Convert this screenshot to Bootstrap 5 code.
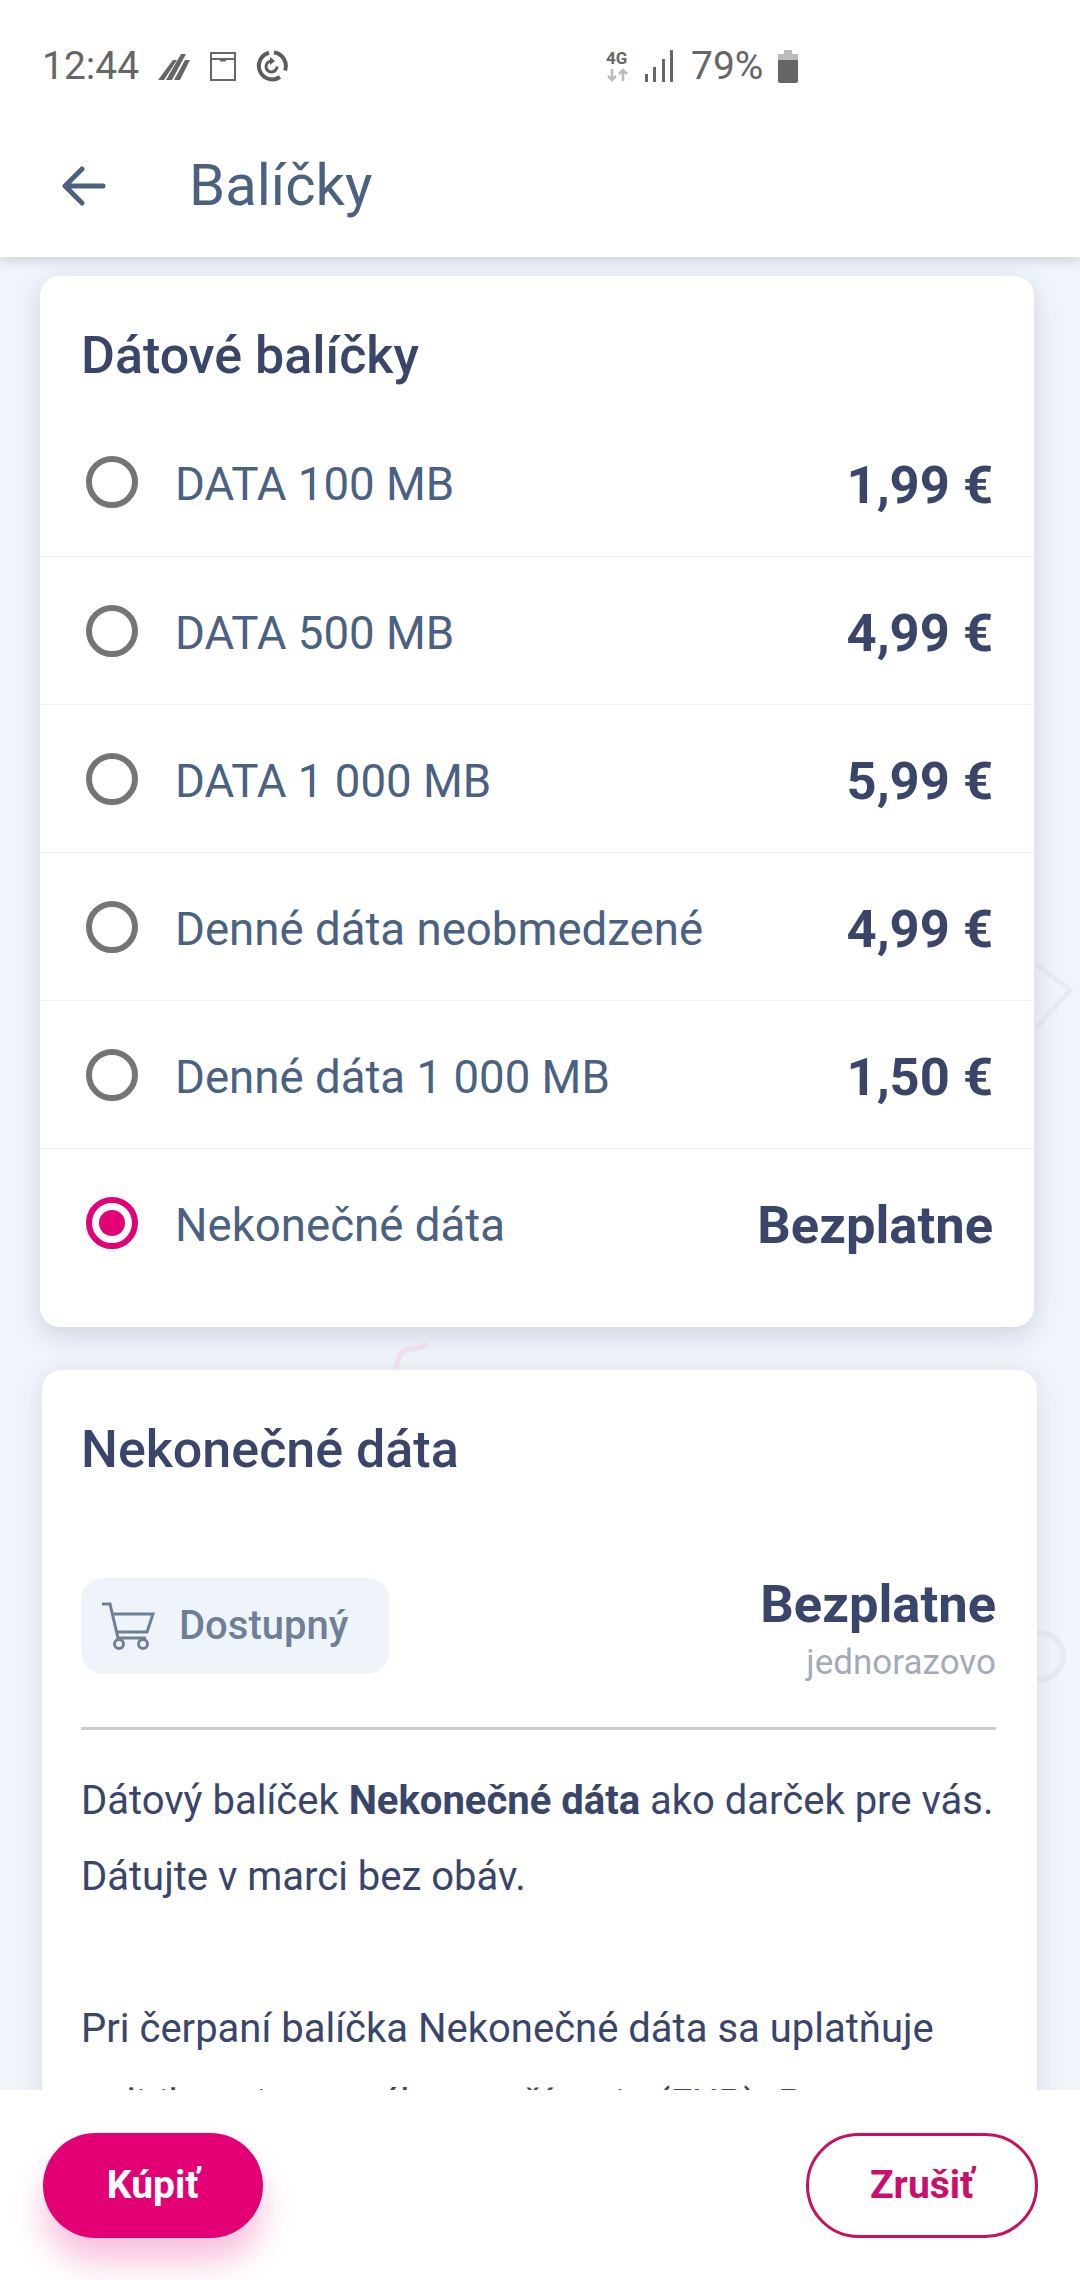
<!DOCTYPE html>
<html lang="sk">
<head>
<meta charset="utf-8">
<title>Balíčky</title>
<link href="https://cdn.jsdelivr.net/npm/bootstrap@5.3.0/dist/css/bootstrap.min.css" rel="stylesheet">
<style>
html, body { margin: 0; height: 100%; }
body { font-family: Roboto, "Liberation Sans", sans-serif; background: #f0f4fb; color: #39456b; }
.screen { width: 1080px; height: 2280px; overflow: hidden; }
.top-area { background: #fff; height: 257px; box-shadow: 0 2px 12px rgba(60,70,100,.24); z-index: 2; }
.status-bar { height: 132px; padding: 0 0 0 42px; color: #666; font-size: 39px; }
.status-time { width: 98px; }
.status-gap-a { margin-left: 18px; }
.status-gap-b { margin-left: 20px; }
.status-right { margin-left: 318px; }
.status-signal { margin-left: 14px; }
.status-pct { margin: 0 14px 0 17px; font-size: 39px; }
.title-bar { height: 125px; padding-bottom: 18px; }
.back-arrow { margin-left: 62px; width: 44px; height: 40px; }
.page-title { margin: 0 0 0 83px; font-size: 58px; font-weight: 400; color: #4a6182; }
.content { flex: 1 1 auto; overflow: hidden; position: relative; }
.decor { position: absolute; inset: 0; width: 100%; height: 100%; }
.pack-card { position: relative; background: #fff; border: 0; border-radius: 20px; box-shadow: 0 8px 26px rgba(70,85,125,.2); }
.pack-first { margin: 19px 46px 0 40px; height: 1051px; }
.pack-second { margin: 43px 43px 0 42px; height: 1100px; box-shadow: 0 4px 26px rgba(70,85,125,.14); }
.card-heading { font-size: 52px; font-weight: 500; color: #39456b; margin: 0; line-height: 1; }
.pack-first .card-heading { padding: 54px 0 0 41px; height: 132px; }
.offer { height: 148px; padding: 0 41px 0 46px; border-top: 1px solid #f2f3f7; }
.offer:first-of-type { border-top: 0; }
.offer-mark { width: 52px; height: 52px; border-radius: 50%; border: 6px solid #757575; flex: none; }
.offer-mark.picked { border-color: #e20074; display: flex; align-items: center; justify-content: center; }
.offer-mark.picked::after { content: ""; width: 26px; height: 26px; border-radius: 50%; background: #e20074; }
.offer-name { margin-left: 37px; padding-top: 7px; font-size: 45.6px; color: #4a6182; }
.offer-price { padding-top: 6px; font-size: 52.5px; font-weight: 700; color: #39456b; }
.pack-second .card-heading { padding: 54px 0 0 39px; height: 193px; }
.detail-head { margin: 0 41px 0 39px; height: 167px; padding-top: 15px; border-bottom: 3px solid #ccc; }
.avail-tag { width: 308px; height: 96px; background: #eff4fa; border-radius: 22px; padding-left: 20px; color: #6f7f99; font-size: 40px; font-weight: 500; }
.avail-tag svg { width: 54px; height: 48px; margin-right: 24px; }
.detail-price { font-size: 52.5px; font-weight: 700; line-height: 1; }
.detail-note { font-size: 35px; color: #a4abb8; line-height: 1; margin-top: 14px; }
.detail-text { margin: 0 30px 0 39px; padding-top: 33px; font-size: 40px; line-height: 76px; color: #39456b; }
.detail-text p { margin: 0 0 76px; }
.detail-text strong { font-weight: 700; }
.action-bar { height: 190px; background: #fff; padding: 0 42px 0 42px; z-index: 2; flex: none; }
.action-btn { height: 105px; border-radius: 53px; font-size: 39px; font-weight: 700; margin-top: 1px; display: flex; align-items: center; justify-content: center; }
.action-buy, .action-buy:hover { width: 220px; background: #e20074; color: #fff; border: 0; box-shadow: 0 24px 32px rgba(226,0,116,.24); margin-left: 1px; }
.action-cancel, .action-cancel:hover { width: 232px; background: #fff; color: #cc0f6c; border: 3px solid #c9105f; }
</style>
</head>
<body>
<div class="screen d-flex flex-column">
  <header class="top-area position-relative flex-shrink-0">
    <div class="status-bar d-flex align-items-center">
      <span class="status-time">12:44</span>
      <svg class="status-gap-a" width="32" height="28" viewBox="0 0 32 28" fill="#666"><path d="M0 28 15 8h4L6 28zM8 28 23 2h5L14 28zM16 28 27 8h5L22 28z"/></svg>
      <svg class="status-gap-b" width="26" height="29" viewBox="0 0 26 29" fill="none" stroke="#666" stroke-width="2"><rect x="1" y="1" width="24" height="27"/><path d="M1 7h24M10 8.500h6"/></svg>
      <svg class="status-gap-b" width="32" height="32" viewBox="0 0 32 32" fill="none" stroke="#5c5c5c" stroke-width="4"><path d="M18 2.500a13.500 13.500 0 0 1 11 18M24 27A13.500 13.500 0 1 1 13 2.800"/><path d="M21 16.500a5.500 5.500 0 1 1-5-5.500" stroke-width="3"/><path d="M14 7l5 4-5 4z" fill="#5c5c5c" stroke="none"/></svg>
      <div class="status-right d-flex align-items-center">
        <svg width="24" height="34" viewBox="0 0 24 34"><text x="0" y="15" font-family="Roboto, sans-serif" font-size="17" font-weight="700" fill="#666">4G</text><path d="M6 20v11M2 27l4 4 4-4M17 32V21M13 25l4-4 4 4" fill="none" stroke="#bbb" stroke-width="2.500"/></svg>
        <svg class="status-signal" width="30" height="32" viewBox="0 0 30 32" fill="#666"><rect x="1" y="24" width="3" height="8"/><rect x="9" y="17" width="3" height="15"/><rect x="18" y="9" width="3" height="23"/><rect x="26" y="0" width="3" height="32"/></svg>
        <span class="status-pct">79%</span>
        <svg width="22" height="33" viewBox="0 0 22 33"><path d="M7 0h8v4h6v8H1V4h6z" fill="#bbb"/><path d="M1 10h20v21a2 2 0 0 1-2 2H3a2 2 0 0 1-2-2z" fill="#666"/></svg>
      </div>
    </div>
    <div class="title-bar d-flex align-items-center">
      <svg class="back-arrow" viewBox="0 0 44 40" fill="none" stroke="#4a6182" stroke-width="5" stroke-linecap="round" stroke-linejoin="round"><path d="M41 20H4M20 3 3 20l17 17"/></svg>
      <h1 class="page-title">Balíčky</h1>
    </div>
  </header>

  <main class="content">
    <!-- faint watermark shapes behind the cards -->
    <svg class="decor" viewBox="0 0 1080 1833" fill="none">
      <path d="M396 1112c3-13 5-20 16-20 8 0 10-3 16-5" stroke="#f6e3ec" stroke-width="5"/>
      <path d="M1036 707l34 26-34 38" stroke="#e8ebf4" stroke-width="5"/>
      <circle cx="1040" cy="1399" r="23" stroke="#e8ebf4" stroke-width="6"/>
    </svg>

    <section class="pack-card pack-first">
      <h2 class="card-heading">Dátové balíčky</h2>
      <div class="offer d-flex align-items-center"><span class="offer-mark"></span><span class="offer-name flex-grow-1">DATA 100 MB</span><span class="offer-price">1,99 €</span></div>
      <div class="offer d-flex align-items-center"><span class="offer-mark"></span><span class="offer-name flex-grow-1">DATA 500 MB</span><span class="offer-price">4,99 €</span></div>
      <div class="offer d-flex align-items-center"><span class="offer-mark"></span><span class="offer-name flex-grow-1">DATA 1 000 MB</span><span class="offer-price">5,99 €</span></div>
      <div class="offer d-flex align-items-center"><span class="offer-mark"></span><span class="offer-name flex-grow-1">Denné dáta neobmedzené</span><span class="offer-price">4,99 €</span></div>
      <div class="offer d-flex align-items-center"><span class="offer-mark"></span><span class="offer-name flex-grow-1">Denné dáta 1 000 MB</span><span class="offer-price">1,50 €</span></div>
      <div class="offer d-flex align-items-center"><span class="offer-mark picked"></span><span class="offer-name flex-grow-1">Nekonečné dáta</span><span class="offer-price">Bezplatne</span></div>
    </section>

    <section class="pack-card pack-second">
      <h2 class="card-heading">Nekonečné dáta</h2>
      <div class="detail-head d-flex justify-content-between align-items-start">
        <div class="avail-tag d-flex align-items-center">
          <svg viewBox="0 0 54 48" fill="none" stroke="#6f7f99" stroke-width="3"><path d="M1 2h8l8 34h28"/><path d="M11 12h41l-6 18H15"/><circle cx="18" cy="42" r="4.500"/><circle cx="42" cy="42" r="4.500"/></svg>
          <span>Dostupný</span>
        </div>
        <div class="text-end">
          <div class="detail-price">Bezplatne</div>
          <div class="detail-note">jednorazovo</div>
        </div>
      </div>
      <div class="detail-text">
        <p>Dátový balíček <strong>Nekonečné dáta</strong> ako darček pre vás. Dátujte v marci bez obáv.</p>
        <p>Pri čerpaní balíčka Nekonečné dáta sa uplatňuje politika primeraného používania (FUP). Pre</p>
      </div>
    </section>
  </main>

  <footer class="action-bar d-flex justify-content-between align-items-center">
    <button type="button" class="btn action-btn action-buy">Kúpiť</button>
    <button type="button" class="btn action-btn action-cancel">Zrušiť</button>
  </footer>
</div>
<script src="https://cdn.jsdelivr.net/npm/bootstrap@5.3.0/dist/js/bootstrap.bundle.min.js"></script>
</body>
</html>
